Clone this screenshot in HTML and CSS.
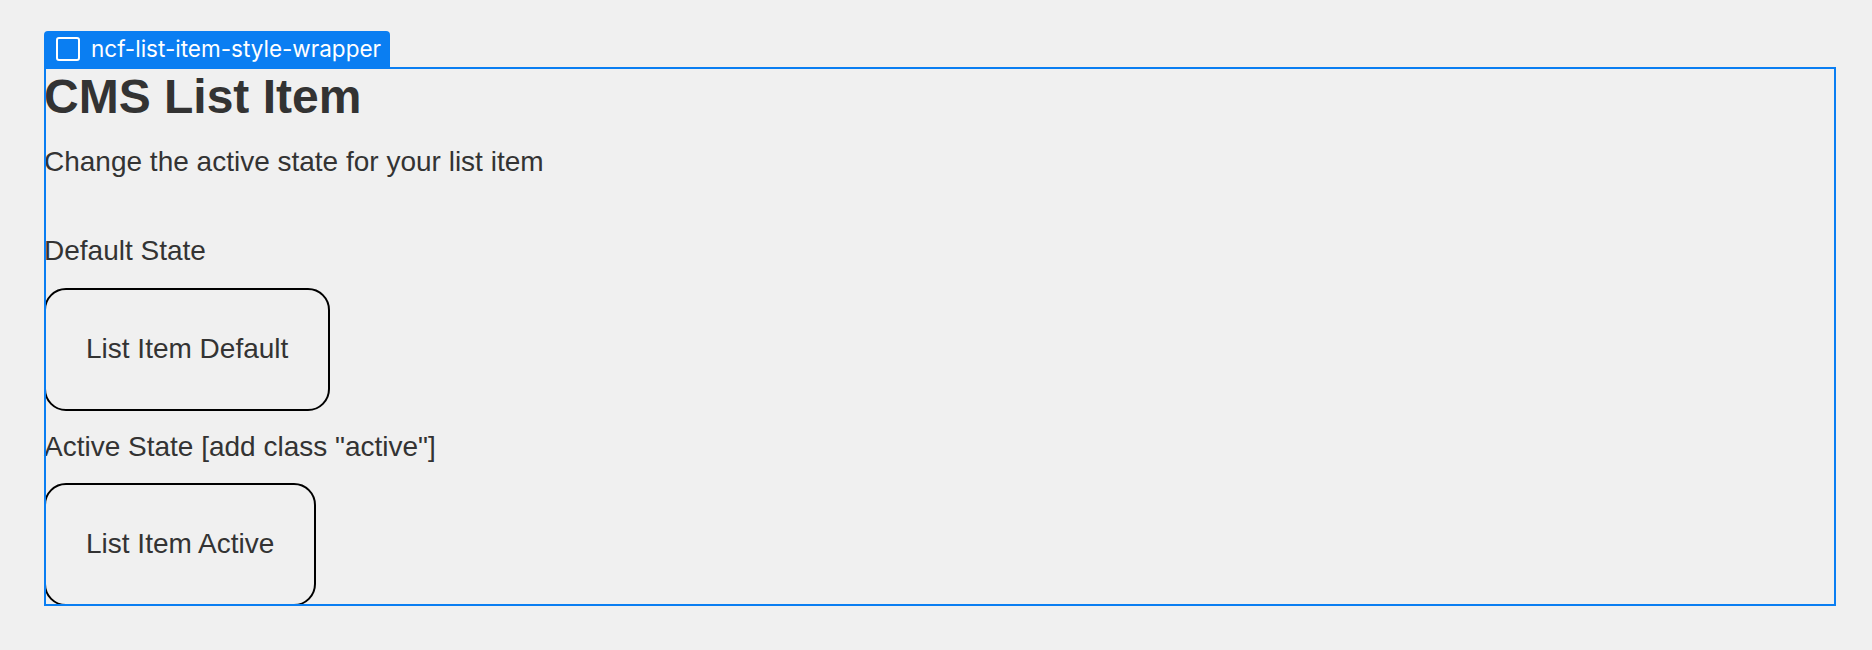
FILE: index.html
```html
<!DOCTYPE html>
<html lang="en">
<head>
<meta charset="utf-8">
<title>CMS List Item</title>
<link rel="stylesheet" href="styles.css">
</head>
<body>
<div class="wrapper">
  <div class="selection-tab">
    <svg class="tab-icon" width="24" height="24" viewBox="0 0 24 24" aria-hidden="true">
      <rect x="1" y="1" width="22" height="22" rx="2" ry="2" fill="none" stroke="#ffffff" stroke-width="2"/>
    </svg>
    <span class="tab-label">ncf-list-item-style-wrapper</span>
  </div>
  <h1 class="title">CMS List Item</h1>
  <p class="intro">Change the active state for your list item</p>
  <div class="state-label state-label-first">Default State</div>
  <div class="list-item">List Item Default</div>
  <div class="state-label">Active State [add class "active"]</div>
  <div class="list-item list-item-active">List Item Active</div>
</div>
</body>
</html>
```
FILE: styles.css
```css
html, body {
  background: #f0f0f0;
}
body {
  margin: 0;
  padding: 67px 36px 40px 44px;
  font-family: "Liberation Sans", Arial, sans-serif;
  color: #333333;
}
.wrapper {
  position: relative;
  display: flex;
  flex-direction: column;
  align-items: flex-start;
  outline: 2px solid #0a7ef2;
  outline-offset: -2px;
}
.selection-tab {
  position: absolute;
  left: 0;
  top: -36px;
  height: 36px;
  box-sizing: border-box;
  display: flex;
  align-items: center;
  gap: 11px;
  padding: 0 9px 0 12px;
  background: #0a7ef2;
  border-radius: 4px 4px 0 0;
  color: #ffffff;
}
.tab-icon {
  display: block;
  flex: none;
}
.tab-label {
  font-family: Inter, "Noto Sans", sans-serif;
  font-size: 22.5px;
  line-height: 26px;
  white-space: nowrap;
}
.title {
  margin: 2px 0 0;
  font-size: 48px;
  line-height: 55px;
  font-weight: 700;
}
.intro {
  margin: 22px 0 0;
  font-size: 28px;
  line-height: 32px;
}
.state-label {
  margin-top: 20px;
  font-size: 28px;
  line-height: 32px;
}
.state-label-first {
  margin-top: 57px;
}
.list-item {
  margin-top: 21px;
  padding: 43px 40px 44px 40px;
  border: 2px solid #000000;
  border-radius: 22px;
  font-size: 28px;
  line-height: 32px;
}
.list-item-active {
  margin-top: 20px;
}
```
